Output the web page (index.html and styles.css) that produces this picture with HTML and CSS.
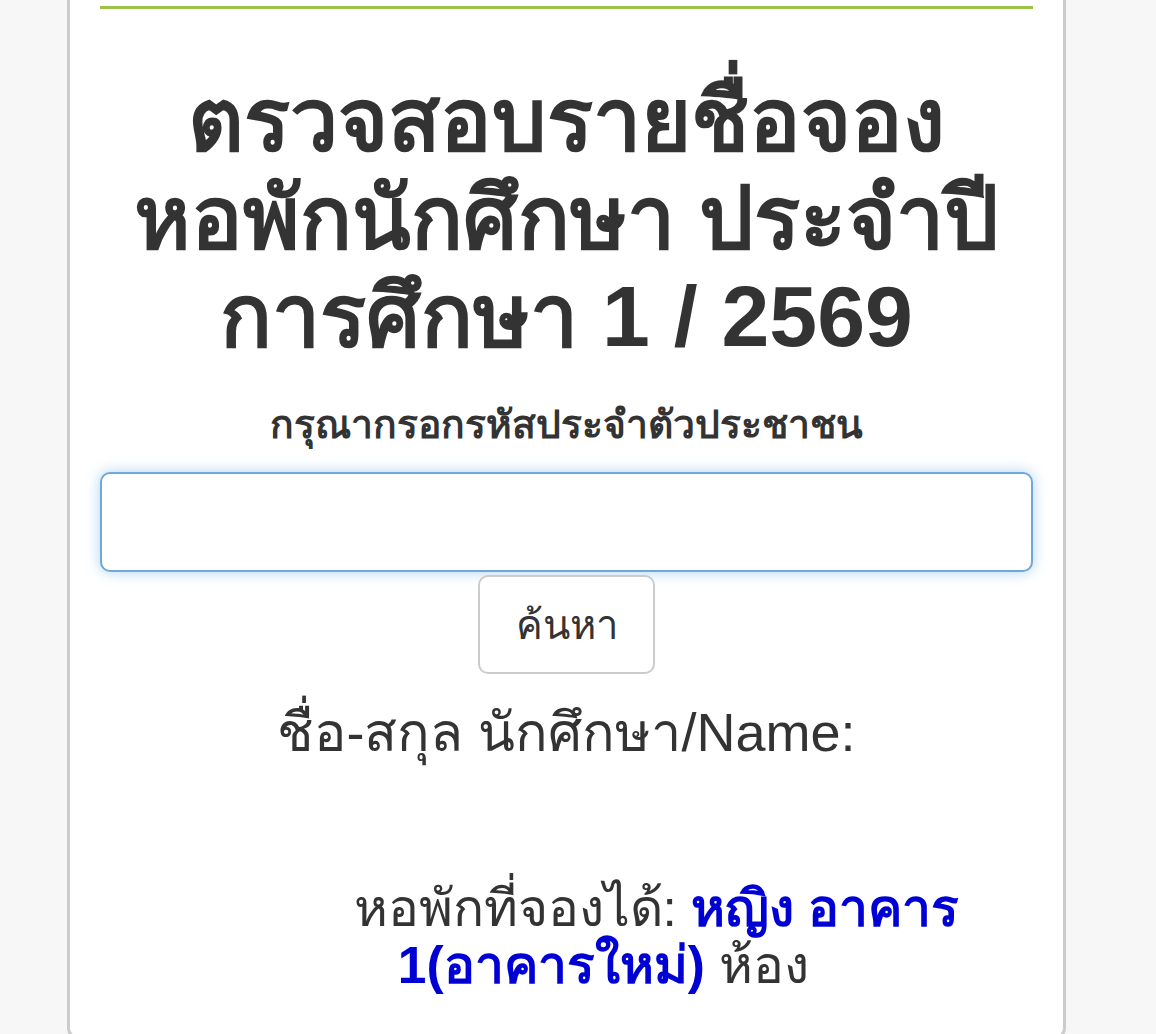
FILE: index.html
```html
<!DOCTYPE html>
<html lang="th">
<head>
<meta charset="utf-8">
<title>ตรวจสอบรายชื่อจองหอพักนักศึกษา</title>
<link rel="stylesheet" href="styles.css">
</head>
<body>
<div class="card">
  <div class="rule"></div>
  <h1 class="title">ตรวจสอบรายชื่อจอง<br>หอพักนักศึกษา ประจำปี<br>การศึกษา 1 / 2569</h1>
  <form class="search">
    <label class="label" for="idcard">กรุณากรอกรหัสประจำตัวประชาชน</label>
    <input class="field" id="idcard" type="text">
    <button class="btn" type="button">ค้นหา</button>
  </form>
  <p class="name">ชื่อ-สกุล นักศึกษา/Name:</p>
  <p class="dorm">หอพักที่จองได้: <b class="blue">หญิง อาคาร</b><br><b class="blue">1(อาคารใหม่)</b> ห้อง<span class="hidden-no"></span></p>
</div>
</body>
</html>
```
FILE: styles.css
```css
html, body {
  margin: 0;
  padding: 0;
}
body {
  background: #f7f7f7;
  font-family: "Liberation Sans", "Noto Sans", sans-serif;
  color: #333;
}
.card {
  box-sizing: border-box;
  margin-left: 67px;
  width: 999px;
  min-height: 1040px;
  background: #fff;
  border: 3px solid #cccccc;
  border-top: none;
  border-radius: 0 0 12px 12px;
  padding: 6px 30px 40px;
}
.rule {
  height: 3px;
  background: #9dc24a;
}
.title {
  margin: 62px 0 0;
  font-size: 86px;
  line-height: 98px;
  font-weight: 600;
  text-align: center;
  color: #333;
}
.search {
  display: flex;
  flex-direction: column;
  align-items: center;
  margin-top: 38px;
}
.label {
  font-size: 39px;
  font-weight: bold;
  line-height: 44px;
}
.field {
  box-sizing: border-box;
  width: 100%;
  height: 100px;
  margin-top: 25px;
  border: 2px solid #72a8d8;
  border-radius: 10px;
  box-shadow: 0 0 14px rgba(102, 175, 233, 0.55);
  outline: none;
  background: #fff;
}
.btn {
  box-sizing: border-box;
  width: 177px;
  height: 99px;
  margin-top: 3px;
  border: 2px solid #cccccc;
  border-radius: 10px;
  background: #fff;
  font-family: "Liberation Sans", "Noto Sans", sans-serif;
  font-size: 40px;
  color: #333;
}
.name {
  margin: 26px 0 0;
  font-size: 54px;
  line-height: 64px;
  text-align: center;
}
.dorm {
  margin: 116px 0 0;
  padding-left: 180px;
  font-size: 51.5px;
  line-height: 57px;
  text-align: center;
}
.blue {
  color: #0000d4;
}
.hidden-no {
  display: inline-block;
  width: 106px;
}
```
